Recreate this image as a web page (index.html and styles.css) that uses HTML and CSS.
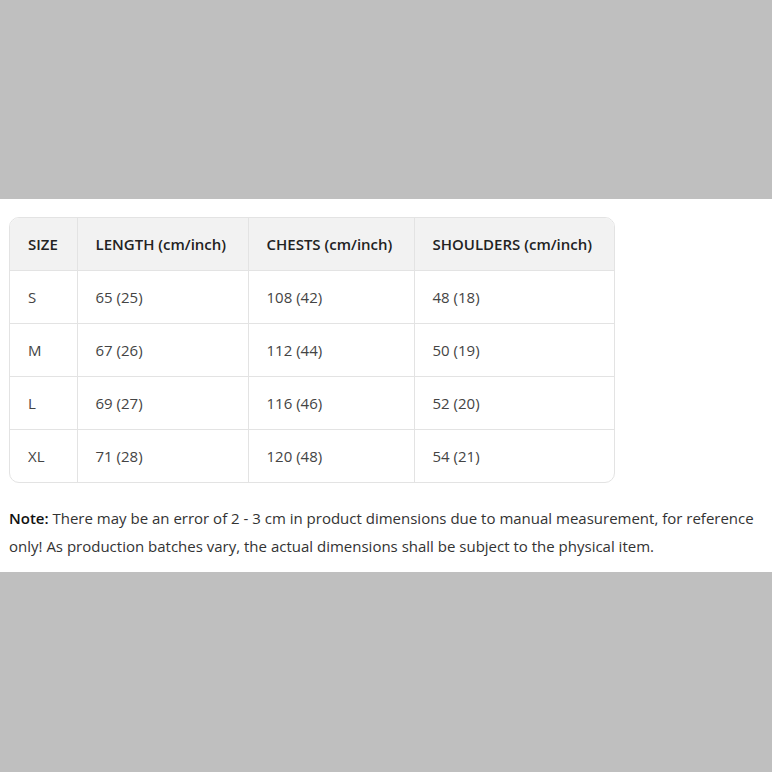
FILE: index.html
```html
<!DOCTYPE html>
<html>
<head>
<meta charset="utf-8">
<link rel="stylesheet" href="styles.css">
</head>
<body>
<div class="band"></div>
<main class="content">
  <div class="table-wrap">
    <table class="size-table">
      <colgroup>
        <col class="c1"><col class="c2"><col class="c3"><col class="c4">
      </colgroup>
      <thead>
        <tr><th>SIZE</th><th>LENGTH (cm/inch)</th><th>CHESTS (cm/inch)</th><th>SHOULDERS (cm/inch)</th></tr>
      </thead>
      <tbody>
        <tr><td>S</td><td>65 (25)</td><td>108 (42)</td><td>48 (18)</td></tr>
        <tr><td>M</td><td>67 (26)</td><td>112 (44)</td><td>50 (19)</td></tr>
        <tr><td>L</td><td>69 (27)</td><td>116 (46)</td><td>52 (20)</td></tr>
        <tr><td>XL</td><td>71 (28)</td><td>120 (48)</td><td>54 (21)</td></tr>
      </tbody>
    </table>
  </div>
  <p class="note"><strong>Note:</strong> There may be an error of 2 - 3 cm in product dimensions due to manual measurement, for reference only! As production batches vary, the actual dimensions shall be subject to the physical item.</p>
</main>
<div class="band band-bottom"></div>
</body>
</html>
```
FILE: styles.css
```css
html, body {
  margin: 0;
  padding: 0;
  background: #bfbfbf;
  font-family: "Open Sans", "Noto Sans", sans-serif;
  color: #333;
}
.band {
  height: 199px;
  background: #bfbfbf;
}
.band-bottom {
  height: 200px;
}
.content {
  background: #fff;
  height: 373px;
  box-sizing: border-box;
  padding: 18px 9px 0 9px;
}
.table-wrap {
  width: 606px;
  border: 1px solid #e3e3e3;
  border-radius: 10px;
  overflow: hidden;
  box-sizing: border-box;
}
.size-table {
  width: 100%;
  border-collapse: collapse;
  table-layout: fixed;
  font-size: 15px;
}
.c1 { width: 67px; }
.c2 { width: 171px; }
.c3 { width: 166px; }
.size-table th,
.size-table td {
  height: 53px;
  padding: 0 0 0 18px;
  text-align: left;
  border-left: 1px solid #e3e3e3;
  border-top: 1px solid #e3e3e3;
  box-sizing: border-box;
}
.size-table th:first-child,
.size-table td:first-child { border-left: none; }
.size-table thead tr th { border-top: none; height: 52px; }
.size-table th {
  background: #f2f2f2;
  font-weight: 600;
  color: #222;
}
.size-table td { color: #444; }
.note {
  margin: 21px 0 0 0;
  font-size: 15px;
  line-height: 28px;
  color: #333;
}
.note strong { font-weight: 600; color: #111; }
```
